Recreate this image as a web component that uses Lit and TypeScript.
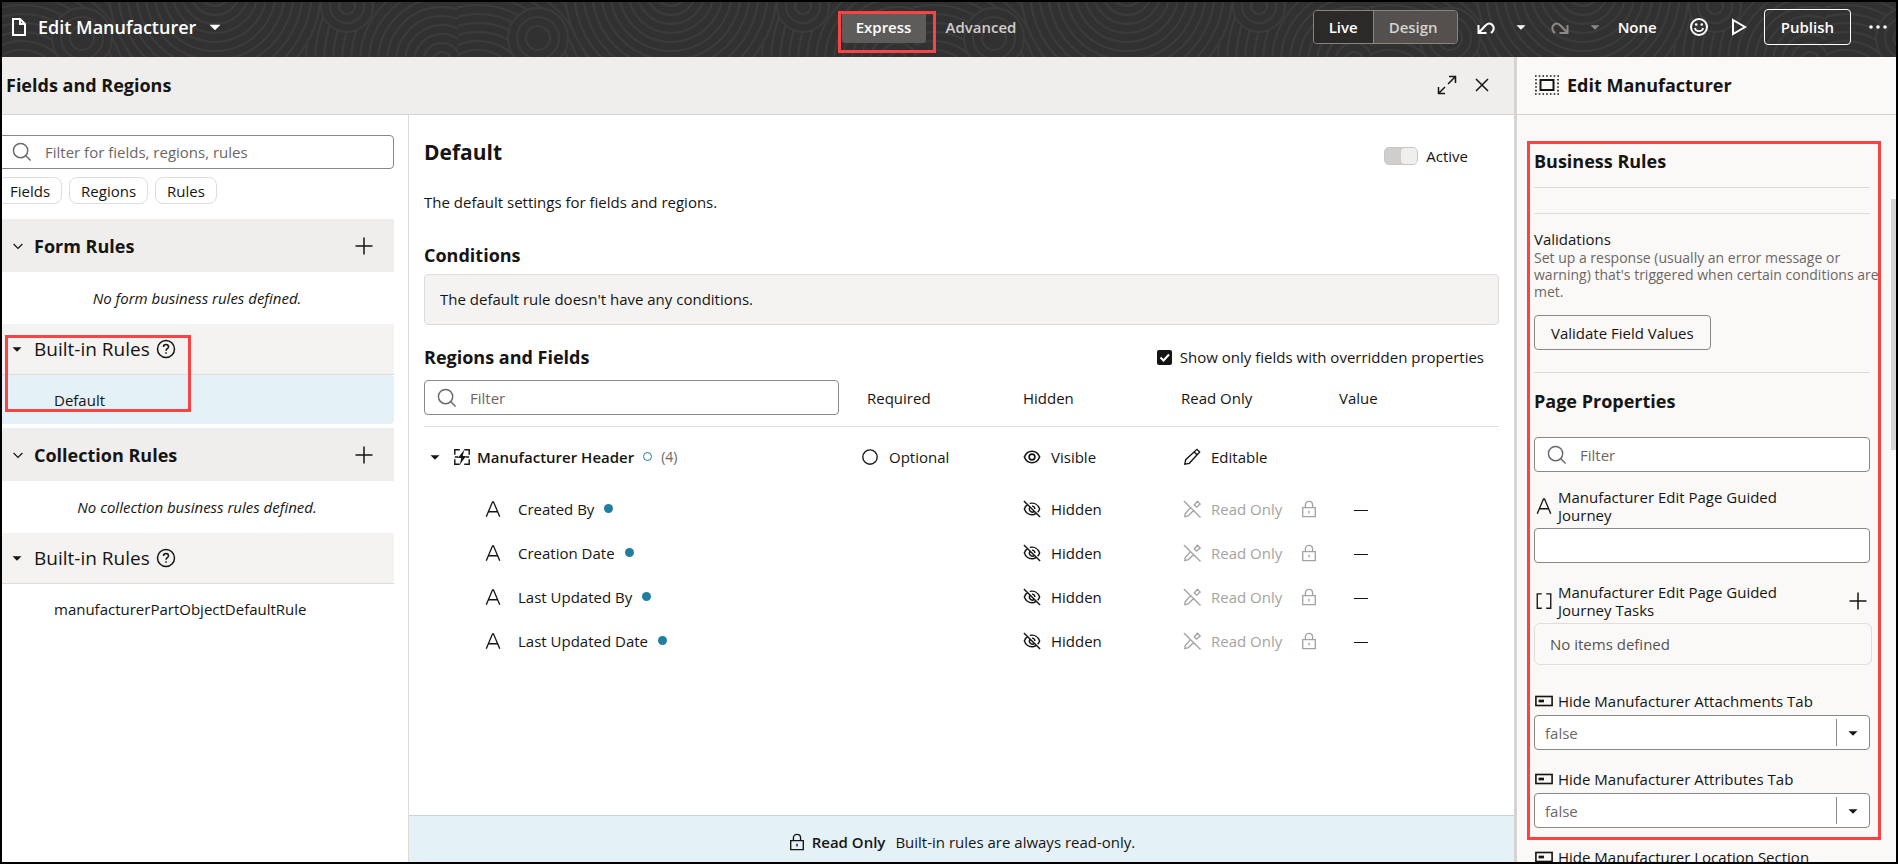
import { LitElement, html, css, svg, nothing } from "lit";
import { customElement, property } from "lit/decorators.js";

const shared = css`
  *, *::before, *::after { box-sizing: border-box; }
  svg { display: block; flex: none; fill: none; stroke: currentColor; stroke-width: 1.5; }
  button { font: inherit; color: inherit; background: none; border: 0; padding: 0; cursor: pointer; display: inline-flex; align-items: center; justify-content: center; }
  input, select { font: inherit; color: inherit; margin: 0; min-width: 0; }
  h1, h2, h3, p, ul { margin: 0; padding: 0; font-size: inherit; font-weight: inherit; }
  ul { list-style: none; }
  .mark { position: absolute; border: 3px solid #fb4343; pointer-events: none; z-index: 2; }
`;

const icons: Record<string, unknown> = {
  doc: svg`<path d="M3 2h7l5 5v11H3z M10 2v5h5" stroke-width="2"/>`,
  caret: svg`<path d="M5 8h10l-5 5z" fill="currentColor" stroke="none"/>`,
  chevron: svg`<path d="M4.500 7.500l5.500 5.500 5.500-5.500"/>`,
  plus: svg`<path d="M10 1.500v17M1.500 10h17"/>`,
  search: svg`<circle cx="9" cy="9" r="7.500"/><path d="M14.500 14.500l5 5"/>`,
  help: svg`<circle cx="10" cy="10" r="8.500"/><path d="M7.500 8c0-3.200 5-3.200 5 0 0 1.600-2.500 1.800-2.500 3.800M10 13.200v1.600"/>`,
  undo: svg`<path d="M2.500 8v8h8M3 15.500l6-6.500c5-5.500 11 0 7.500 5.500l-1.500 1.500" stroke-width="2"/>`,
  redo: svg`<path d="M17.500 8v8h-8M17 15.500l-6-6.500c-5-5.500-11 0-7.500 5.500l1.500 1.500" stroke-width="2"/>`,
  smile: svg`<circle cx="10" cy="10" r="8" stroke-width="2"/><path d="M5.800 11c1 4.200 7.400 4.200 8.400 0" stroke-width="1.600"/><circle cx="7.200" cy="7.500" r="1.300" fill="currentColor" stroke="none"/><circle cx="12.800" cy="7.500" r="1.300" fill="currentColor" stroke="none"/>`,
  play: svg`<path d="M4 3l12 7-12 7z" stroke-width="2"/>`,
  dots: svg`<g fill="currentColor" stroke="none"><circle cx="3" cy="10" r="1.800"/><circle cx="10" cy="10" r="1.800"/><circle cx="17" cy="10" r="1.800"/></g>`,
  expand: svg`<path d="M12 1.500h6.500V8M8 18.500H1.500V12M18 2l-7 7M2 18l6-6"/>`,
  close: svg`<path d="M4 4l12 12M16 4L4 16"/>`,
  page: svg`<path d="M0 1h24M0 19h24" stroke-dasharray="1.600 2.130" stroke-width="1.600"/><path d="M1 4v13M23 4v13" stroke-dasharray="1.600 2" stroke-width="1.600"/><rect x="5.500" y="5" width="13" height="10" stroke-width="2"/>`,
  text: svg`<path d="M2.500 18.500L9.500 2h1l7 16.500M5 13h10"/>`,
  region: svg`<path d="M7.500 2H2v5.500M12.500 2H18v5.500M2 12.500V18h5.500M18 12.500V18h-5.500M2 10h4M14 10h4" stroke-width="1.600"/><path d="M12.500 2L5.500 11h3.700L7.500 18.500 14.500 9h-3.700z" fill="currentColor" stroke="none"/>`,
  circle: svg`<circle cx="10" cy="10" r="8"/>`,
  eye: svg`<path d="M1.500 10c3.500-8.500 13.500-8.500 17 0-3.500 8.500-13.500 8.500-17 0z" stroke-width="1.800"/><circle cx="10" cy="10" r="3.200" stroke-width="1.800"/>`,
  eyeoff: svg`<path d="M5 4.800C3.500 6 2.200 7.800 1.500 10c1.500 4 4.700 6.300 8.500 6.300 1.700 0 3-.4 4.300-1.200M7.500 3.800c4.500-1 9 1.200 11 6.200-.5 1.500-1.300 2.700-2.200 3.700M8 7.800a3.200 3.200 0 0 0 4.500 4.600M10 6.800a3.200 3.200 0 0 1 3.200 3.200M1 1l18 18" stroke-width="1.600"/>`,
  pencil: svg`<path d="M2 18l1-5L15.500 1.500l3 3L7 17zM12.500 4.500l3 3"/>`,
  pencilOff: svg`<path d="M8 9l-5.500 6-.5 3.500 4-1L11.500 12M12.500 5.500l3.500-4 3 3-4 3.500zM1 1l18.500 18.500"/>`,
  lock: svg`<path d="M3 8.500h14v10H3zM6 8.500V5.500c0-5.300 8-5.300 8 0v3M10 12v3"/>`,
  array: svg`<path d="M7.500 2H2.500v16h5M12.500 2h5v16h-5"/>`,
  flag: svg`<rect x="1" y="5" width="18" height="10" stroke-width="1.800"/><rect x="4" y="8.500" width="6" height="3" fill="currentColor" stroke="none"/>`,
};

const icon = (name: string, size = 20, width = size) =>
  html`<svg width=${width} height=${size} viewBox=${name === "page" ? "0 0 24 20" : name === "search" ? "0 0 21 21" : "0 0 20 20"} aria-hidden="true">${icons[name]}</svg>`;

const rings = (cx: number, cy: number, from: number, to: number) => {
  const out = [];
  for (let r = to; r >= from; r -= 9) out.push(svg`<circle cx=${cx} cy=${cy} r=${r} fill="#323131"/>`);
  return out;
};

@customElement("top-bar")
class TopBar extends LitElement {
  static styles = [shared, css`
    :host { display: block; flex: none; position: relative; height: 55px; background: #323131; color: #fff; overflow: hidden; }
    .pattern { position: absolute; inset: 0; width: 100%; height: 100%; stroke: #3c3b3b; stroke-width: 2; }
    .bar { position: relative; display: grid; grid-template-columns: 1fr auto 1fr; height: 100%; align-items: center; padding: 0 8px 6px; font-weight: 600; }
    .name { gap: 8px; font-size: 18px; justify-self: start; }
    .tabs { display: flex; position: relative; color: #d0cdcb; margin-right: 26px; }
    .tabs button { height: 32px; padding: 0 14px; border-radius: 3px; }
    .tabs .on { background: #5e5c5b; color: #fff; margin-right: 6px; width: 84px; }
    .mark { left: -4px; top: 0; width: 98px; height: 42px; }
    .tools { display: flex; align-items: center; justify-content: flex-end; }
    .seg { display: flex; border: 1px solid #8a8481; border-radius: 4px; overflow: hidden; height: 34px; margin-right: 18px; }
    .seg button { padding: 0 15px; background: #2b2a29; }
    .seg .off { background: #53504d; color: #d5d2cf; border-left: 1px solid #8a8481; padding: 0 19px 0 15px; }
    .tools .gap { margin-right: 20px; }
    .dim { color: #8b8886; }
    .publish { height: 36px; padding: 0 16px; border: 1px solid #fff; border-radius: 4px; margin: 0 17px 0 15px; }
    .none { margin: 0 32px 0 14px; }
    .arrow { margin-right: 16px; }
  `];
  render() {
    return html`
      <svg class="pattern" aria-hidden="true">
        <defs><pattern id="waves" width="456" height="56" patternUnits="userSpaceOnUse">
          ${rings(440, 60, 8, 190)}${rings(20, 90, 8, 150)}${rings(80, 36, 4, 30)}${rings(213, -12, 8, 106)}${rings(345, 4, 5, 26)}
        </pattern></defs>
        <rect width="100%" height="100%" fill="url(#waves)" stroke="none"></rect>
      </svg>
      <div class="bar">
        <button class="name">${icon("doc")}<span>Edit Manufacturer</span>${icon("caret", 22)}</button>
        <nav class="tabs"><button class="on">Express</button><button>Advanced</button><span class="mark"></span></nav>
        <div class="tools">
          <div class="seg"><button>Live</button><button class="off">Design</button></div>
          <button class="arrow" aria-label="Undo">${icon("undo")}</button>
          <button class="gap" aria-label="Undo history">${icon("caret", 18)}</button>
          <button class="arrow dim" aria-label="Redo">${icon("redo")}</button>
          <button class="dim" aria-label="Redo history">${icon("caret", 18)}</button>
          <button class="none">None</button>
          <button aria-label="Feedback" class="gap">${icon("smile")}</button>
          <button aria-label="Preview">${icon("play")}</button>
          <button class="publish">Publish</button>
          <button aria-label="More">${icon("dots")}</button>
        </div>
      </div>`;
  }
}

@customElement("rules-nav")
class RulesNav extends LitElement {
  static styles = [shared, css`
    :host { display: block; width: 407px; flex: none; border-right: 1px solid #dedcda; padding: 20px 14px 0 0; overflow: hidden; }
    .search { display: flex; align-items: center; gap: 13px; height: 34px; margin-left: -6px; padding-left: 15px; border: 1px solid #8a8785; border-radius: 4px; color: #6b6764; }
    .search input { flex: 1; border: 0; outline: 0; background: none; padding: 0; }
    .search input::placeholder { color: #6b6764; opacity: 1; }
    .chips { display: flex; gap: 7px; margin: 8px 0 15px -6px; }
    .chips button { height: 27px; padding: 0 11px; border: 1px solid #e0dedc; border-radius: 8px; font-weight: 500; }
    .chips button:first-child { padding-left: 13px; }
    .head { display: flex; align-items: center; height: 53px; padding: 0 20px 0 8px; background: #f0eeec; font-size: 18px; font-weight: 700; }
    .head h3 { flex: 1; margin-left: 8px; }
    .sub { display: flex; align-items: center; height: 51px; padding: 0 19px 0 6px; background: #f5f3f2; border-bottom: 1px solid #dedcda; font-size: 19px; font-weight: 500; }
    .sub h3 { margin: 0 6px 0 8px; }
    .empty { height: 52px; line-height: 52px; text-align: center; font-style: italic; padding-right: 2px; }
    .item { display: flex; align-items: center; width: 100%; height: 49px; justify-content: flex-start; padding-left: 52px; }
    .item.on { background: #e4f1f7; border-radius: 0 4px 4px 0; }
    .group { position: relative; margin-bottom: 4px; }
    .mark { left: 3px; top: 11px; width: 186px; height: 77px; }
  `];
  private head(title: string) {
    return html`<div class="head">${icon("chevron", 16)}<h3>${title}</h3><button aria-label="Add">${icon("plus")}</button></div>`;
  }
  private sub() {
    return html`<div class="sub">${icon("caret", 18)}<h3>Built-in Rules</h3>${icon("help")}</div>`;
  }
  render() {
    return html`
      <label class="search">${icon("search")}<input type="text" aria-label="Filter" placeholder="Filter for fields, regions, rules" /></label>
      <div class="chips"><button>Fields</button><button>Regions</button><button>Rules</button></div>
      ${this.head("Form Rules")}
      <p class="empty">No form business rules defined.</p>
      <div class="group">${this.sub()}<button class="item on">Default</button><span class="mark"></span></div>
      ${this.head("Collection Rules")}
      <p class="empty">No collection business rules defined.</p>
      <div class="group">${this.sub()}<button class="item">manufacturerPartObjectDefaultRule</button></div>`;
  }
}

@customElement("rule-detail")
class RuleDetail extends LitElement {
  static styles = [shared, css`
    :host { display: flex; flex-direction: column; flex: 1; min-width: 0; }
    .body { flex: 1; padding: 22px 15px 0; min-height: 0; }
    .title { display: flex; justify-content: space-between; align-items: center; height: 32px; padding-right: 31px; }
    h2 { font-size: 21px; font-weight: 700; line-height: 28px; padding-bottom: 2px; }
    .active { display: flex; align-items: center; gap: 8px; font-weight: 500; padding-top: 6px; }
    .switch { appearance: none; width: 34px; height: 18px; border-radius: 5px; background: #d0cecc; border: 1px solid #c9c7c5; position: relative; }
    .switch::after { content: ""; position: absolute; left: 16px; top: 0; width: 16px; height: 16px; border-radius: 4px; background: #f1efed; }
    .intro { margin: 22px 0 30px; line-height: 22px; }
    h3 { font-size: 18px; font-weight: 700; line-height: 24px; }
    .box { height: 51px; line-height: 49px; padding-left: 15px; margin: 7px 0 20px; border: 1px solid #dedcda; border-radius: 4px; background: #f5f3f2; }
    .row { display: flex; justify-content: space-between; align-items: center; }
    .only { display: flex; align-items: center; gap: 8px; padding-right: 15px; }
    .only input { appearance: none; width: 15px; height: 15px; border-radius: 2px; background: #161513 url("data:image/svg+xml,%3Csvg xmlns='http://www.w3.org/2000/svg' viewBox='0 0 15 15'%3E%3Cpath d='M3.500 7.500l3 3 5.500-6' fill='none' stroke='white' stroke-width='2'/%3E%3C/svg%3E"); }
    table { width: 100%; border-collapse: collapse; table-layout: fixed; margin-top: 11px; }
    th { font-weight: 500; text-align: left; padding: 0 0 11px; border-bottom: 1px solid #e0dedc; }
    th:nth-child(2) { padding-left: 6px; }
    .c1 { width: 162px; }
    .c2 { width: 158px; }
    .c3 { width: 160px; }
    .filter { display: flex; align-items: center; gap: 13px; width: 415px; height: 35px; padding-left: 12px; border: 1px solid #8a8785; border-radius: 4px; color: #6b6764; font-weight: 400; }
    .filter input { border: 0; outline: 0; background: none; padding: 0; flex: 1; }
    .filter input::placeholder { color: #6b6764; opacity: 1; }
    td { padding: 0; height: 44px; }
    .parent td { height: 60px; }
    .cell { display: flex; align-items: center; gap: 10px; }
    .ro { padding-left: 2px; }
    .name { gap: 9px; padding-left: 2px; font-weight: 600; }
    .name svg + svg { margin-right: -3px; }
    .count { color: #6b6764; font-weight: 400; font-size: 14px; }
    .ring { width: 9px; height: 9px; border-radius: 50%; border: 1px solid #227e9e; }
    .leaf { padding-left: 60px; gap: 16px; }
    .dot { width: 9px; height: 9px; border-radius: 50%; background: #227e9e; margin-left: -6px; }
    .dim { color: #a5a3a1; }
    .lock { margin-left: 8px; }
    .dash { width: 14px; height: 1px; background: #161513; margin: 3px 0 0 15px; }
    footer { height: 47px; padding-top: 5px; display: flex; align-items: center; justify-content: center; gap: 6px; border-top: 1px solid #c5d5dc; background: #e4f1f7; }
    footer span { margin-left: 4px; }
    b { font-weight: 600; }
  `];
  render() {
    const fields = ["Created By", "Creation Date", "Last Updated By", "Last Updated Date"];
    return html`
      <div class="body">
        <div class="title"><h2>Default</h2><label class="active"><input class="switch" type="checkbox" role="switch" checked disabled />Active</label></div>
        <p class="intro">The default settings for fields and regions.</p>
        <h3>Conditions</h3>
        <p class="box">The default rule doesn't have any conditions.</p>
        <div class="row"><h3>Regions and Fields</h3><label class="only"><input type="checkbox" checked />Show only fields with overridden properties</label></div>
        <table>
          <colgroup><col /><col class="c1" /><col class="c2" /><col class="c2" /><col class="c3" /></colgroup>
          <thead><tr>
            <th><label class="filter">${icon("search")}<input type="text" aria-label="Filter" placeholder="Filter" /></label></th>
            <th>Required</th><th>Hidden</th><th>Read Only</th><th>Value</th>
          </tr></thead>
          <tbody>
            <tr class="parent">
              <td><div class="cell name">${icon("caret", 18)}${icon("region", 18)}<span>Manufacturer Header</span><i class="ring"></i><span class="count">(4)</span></div></td>
              <td><div class="cell">${icon("circle", 18)}Optional</div></td>
              <td><div class="cell">${icon("eye", 18)}Visible</div></td>
              <td><div class="cell ro">${icon("pencil", 18)}Editable</div></td>
              <td></td>
            </tr>
            ${fields.map((f) => html`<tr>
              <td><div class="cell leaf">${icon("text", 18)}<span>${f}</span><i class="dot"></i></div></td>
              <td></td>
              <td><div class="cell">${icon("eyeoff", 18)}Hidden</div></td>
              <td><div class="cell ro dim">${icon("pencilOff", 18)}Read Only<span class="lock">${icon("lock", 18)}</span></div></td>
              <td><div class="dash" role="img" aria-label="No value"></div></td>
            </tr>`)}
          </tbody>
        </table>
      </div>
      <footer>${icon("lock", 18)}<b>Read Only</b><span>Built-in rules are always read-only.</span></footer>`;
  }
}

@customElement("prop-label")
class PropLabel extends LitElement {
  @property() icon = "flag";
  @property() text = "";
  @property({ type: Boolean }) add = false;
  static styles = [shared, css`
    :host { display: flex; align-items: center; gap: 5px; line-height: 18px; padding-left: 1px; font-weight: 500; }
    .t { width: 230px; }
    .w { flex: 1; white-space: nowrap; }
    button { margin: 0 2px 0 auto; }
  `];
  render() {
    return html`${icon(this.icon, 18)}<span class=${this.icon === "flag" ? "w" : "t"}>${this.text}</span>
      ${this.add ? html`<button aria-label="Add item">${icon("plus")}</button>` : nothing}`;
  }
}

@customElement("properties-panel")
class PropertiesPanel extends LitElement {
  static styles = [shared, css`
    :host { display: flex; flex-direction: column; width: 382px; flex: none; border-left: 3px solid #d6d4d2; background: #fbf9f8; position: relative; overflow: hidden; }
    header { display: flex; align-items: center; gap: 8px; height: 58px; flex: none; padding: 0 0 2px 18px; border-bottom: 1px solid #d6d2ce; font-size: 18px; font-weight: 700; }
    .body { padding: 34px 26px 0 17px; }
    h2 { font-size: 18px; font-weight: 700; line-height: 24px; }
    .line { border: 0; height: 1px; margin: 0; background: #dedcda; }
    h2 + .line { margin: 14px 0 25px; }
    h3 { font-weight: 500; line-height: 20px; margin-top: 15px; }
    .note { color: #6b6764; font-size: 14px; line-height: 17px; margin-right: -10px; }
    .action { height: 35px; padding: 0 16px; border: 1px solid #8a8785; border-radius: 4px; font-weight: 500; margin: 15px 0 22px; }
    .pp { margin: 16px 0 24px; }
    .lb { display: block; margin: 16px 0 4px; }
    .tasks { margin: 20px 0 4px; }
    .field { display: flex; align-items: center; gap: 13px; width: 100%; height: 35px; border: 1px solid #8a8785; border-radius: 4px; background: #fff; padding: 0 12px; color: #6b6764; }
    .field input { flex: 1; border: 0; outline: 0; padding: 0; background: none; }
    .field input::placeholder { color: #6b6764; opacity: 1; }
    .none { height: 42px; line-height: 40px; padding-left: 15px; margin: 0 -2px 27px 0; border: 1px solid #e0dedc; border-radius: 6px; color: #55524f; }
    .pick { position: relative; margin: 5px 0 20px; }
    select { appearance: none; width: 100%; height: 35px; border: 1px solid #8a8785; border-radius: 4px; background: #fff; padding: 0 40px 0 10px; color: #6b6764; display: block; }
    .drop { position: absolute; right: 1px; top: 4px; height: 27px; width: 33px; border-left: 1px solid #8a8785; display: flex; align-items: center; justify-content: center; pointer-events: none; }
    .mark { left: 10px; top: 84px; width: 354px; height: 699px; }
    .scroll { position: absolute; right: 0; top: 142px; width: 5px; height: 251px; background: #d8d6d5; }
  `];
  private pick(text: string, id: string) {
    return html`<label for=${id}><prop-label text=${text}></prop-label></label>
      <div class="pick"><select id=${id}><option>false</option><option>true</option></select><span class="drop">${icon("caret", 18)}</span></div>`;
  }
  render() {
    return html`
      <header>${icon("page", 20, 24)}<span>Edit Manufacturer</span></header>
      <div class="body">
        <h2>Business Rules</h2>
        <hr class="line" />
        <hr class="line" />
        <h3>Validations</h3>
        <p class="note">Set up a response (usually an error message or warning) that's triggered when certain conditions are met.</p>
        <button class="action">Validate Field Values</button>
        <hr class="line" />
        <h2 class="pp">Page Properties</h2>
        <label class="field">${icon("search")}<input type="text" aria-label="Filter" placeholder="Filter" /></label>
        <label class="lb" for="journey"><prop-label icon="text" text="Manufacturer Edit Page Guided Journey"></prop-label></label>
        <div class="field"><input id="journey" type="text" /></div>
        <prop-label class="tasks" icon="array" text="Manufacturer Edit Page Guided Journey Tasks" add></prop-label>
        <p class="none">No items defined</p>
        ${this.pick("Hide Manufacturer Attachments Tab", "attachments")}
        ${this.pick("Hide Manufacturer Attributes Tab", "attributes")}
        ${this.pick("Hide Manufacturer Location Section", "location")}
      </div>
      <span class="mark"></span><span class="scroll"></span>`;
  }
}

@customElement("app-root")
class AppRoot extends LitElement {
  static styles = [shared, css`
    :host { display: flex; flex-direction: column; box-sizing: border-box; height: 100vh; border: 2px solid #000; overflow: hidden; background: #fff; color: #161513; font-family: "Open Sans", "Noto Sans", sans-serif; font-size: 15px; }
    .page { display: flex; flex: 1; min-height: 0; }
    .left { display: flex; flex-direction: column; flex: 1; min-width: 0; }
    .bar { display: flex; align-items: center; gap: 15px; height: 58px; flex: none; padding: 0 22px 2px 4px; background: #f0eeec; border-bottom: 1px solid #d6d3d0; font-size: 18px; font-weight: 700; }
    .bar h1 { flex: 1; }
    .cols { display: flex; flex: 1; min-height: 0; }
  `];
  render() {
    return html`
      <top-bar></top-bar>
      <div class="page">
        <div class="left">
          <div class="bar"><h1>Fields and Regions</h1><button aria-label="Expand">${icon("expand")}</button><button aria-label="Close">${icon("close")}</button></div>
          <div class="cols"><rules-nav></rules-nav><rule-detail></rule-detail></div>
        </div>
        <properties-panel></properties-panel>
      </div>`;
  }
}
